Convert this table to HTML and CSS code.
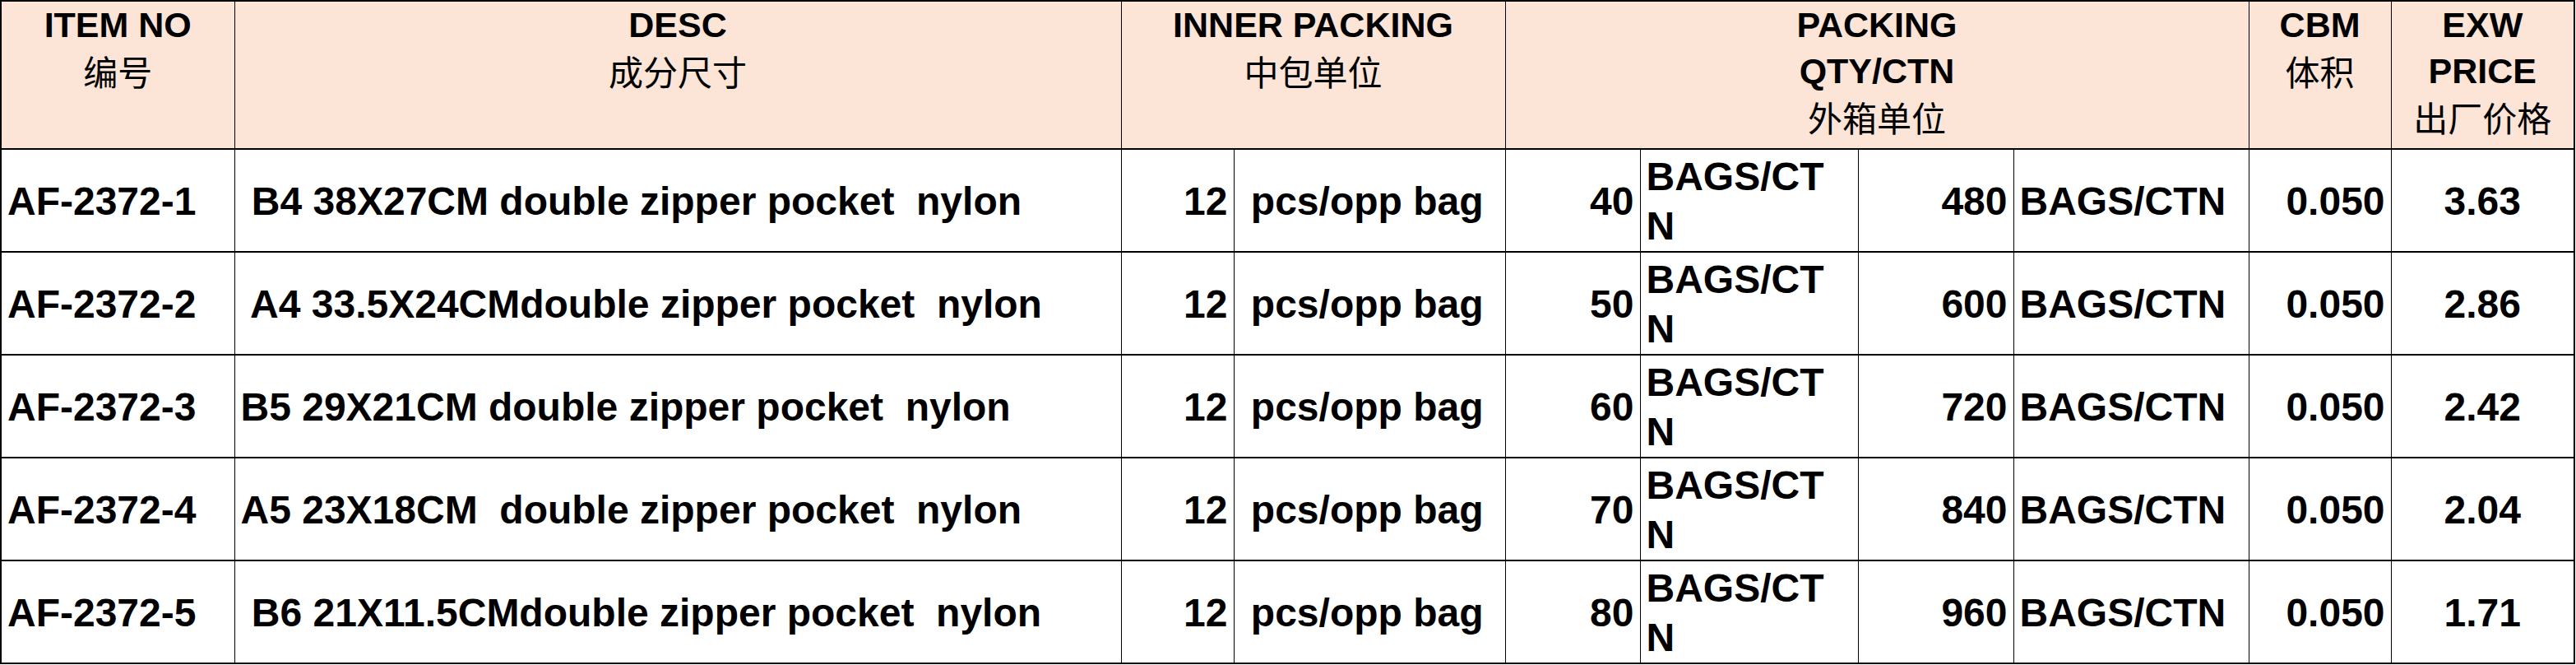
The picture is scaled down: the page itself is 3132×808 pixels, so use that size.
FILE: index.html
```html
<!DOCTYPE html>
<html>
<head>
<meta charset="utf-8">
<link rel="stylesheet" href="styles.css">
</head>
<body>
<table class="sheet">
  <colgroup>
    <col class="c-item"><col class="c-desc"><col class="c-inq"><col class="c-inu">
    <col class="c-pq"><col class="c-pu"><col class="c-tq"><col class="c-tu">
    <col class="c-cbm"><col class="c-price">
  </colgroup>
  <thead>
    <tr class="head-row">
      <th class="hd">ITEM NO<br><span class="cn">编号</span></th>
      <th class="hd">DESC<br><span class="cn">成分尺寸</span></th>
      <th class="hd" colspan="2">INNER PACKING<br><span class="cn">中包单位</span></th>
      <th class="hd" colspan="4">PACKING<br>QTY/CTN<br><span class="cn">外箱单位</span></th>
      <th class="hd">CBM<br><span class="cn">体积</span></th>
      <th class="hd">EXW<br>PRICE<br><span class="cn">出厂价格</span></th>
    </tr>
  </thead>
  <tbody>
    <tr class="row">
      <td class="cell left">AF-2372-1</td>
      <td class="cell left pre"> B4 38X27CM double zipper pocket  nylon</td>
      <td class="cell right">12</td>
      <td class="cell left pre"> pcs/opp bag</td>
      <td class="cell right">40</td>
      <td class="cell left wrap">BAGS/CT<br>N</td>
      <td class="cell right">480</td>
      <td class="cell left">BAGS/CTN</td>
      <td class="cell right">0.050</td>
      <td class="cell center">3.63</td>
    </tr>
    <tr class="row">
      <td class="cell left">AF-2372-2</td>
      <td class="cell left pre"> A4 33.5X24CMdouble zipper pocket  nylon</td>
      <td class="cell right">12</td>
      <td class="cell left pre"> pcs/opp bag</td>
      <td class="cell right">50</td>
      <td class="cell left wrap">BAGS/CT<br>N</td>
      <td class="cell right">600</td>
      <td class="cell left">BAGS/CTN</td>
      <td class="cell right">0.050</td>
      <td class="cell center">2.86</td>
    </tr>
    <tr class="row">
      <td class="cell left">AF-2372-3</td>
      <td class="cell left pre">B5 29X21CM double zipper pocket  nylon</td>
      <td class="cell right">12</td>
      <td class="cell left pre"> pcs/opp bag</td>
      <td class="cell right">60</td>
      <td class="cell left wrap">BAGS/CT<br>N</td>
      <td class="cell right">720</td>
      <td class="cell left">BAGS/CTN</td>
      <td class="cell right">0.050</td>
      <td class="cell center">2.42</td>
    </tr>
    <tr class="row">
      <td class="cell left">AF-2372-4</td>
      <td class="cell left pre">A5 23X18CM  double zipper pocket  nylon</td>
      <td class="cell right">12</td>
      <td class="cell left pre"> pcs/opp bag</td>
      <td class="cell right">70</td>
      <td class="cell left wrap">BAGS/CT<br>N</td>
      <td class="cell right">840</td>
      <td class="cell left">BAGS/CTN</td>
      <td class="cell right">0.050</td>
      <td class="cell center">2.04</td>
    </tr>
    <tr class="row">
      <td class="cell left">AF-2372-5</td>
      <td class="cell left pre"> B6 21X11.5CMdouble zipper pocket  nylon</td>
      <td class="cell right">12</td>
      <td class="cell left pre"> pcs/opp bag</td>
      <td class="cell right">80</td>
      <td class="cell left wrap">BAGS/CT<br>N</td>
      <td class="cell right">960</td>
      <td class="cell left">BAGS/CTN</td>
      <td class="cell right">0.050</td>
      <td class="cell center">1.71</td>
    </tr>
  </tbody>
</table>
</body>
</html>
```
FILE: styles.css
```css
html, body {
  margin: 0;
  padding: 0;
  background: #ffffff;
}

.sheet {
  border-collapse: collapse;
  table-layout: fixed;
  width: 3130px;
  font-family: "Liberation Sans", Arial, "Noto Sans CJK SC", sans-serif;
  font-weight: bold;
  color: #000000;
  border: 2px solid #000000;
}

.c-item { width: 284px; }
.c-desc { width: 1078px; }
.c-inq { width: 137px; }
.c-inu { width: 330px; }
.c-pq { width: 164px; }
.c-pu { width: 265px; }
.c-tq { width: 189px; }
.c-tu { width: 286px; }
.c-cbm { width: 173px; }
.c-price { width: 223px; }

.head-row {
  height: 180px;
}

.hd {
  background: #fce4d6;
  border: 1px solid #000000;
  border-bottom: 2px solid #000000;
  font-size: 43px;
  line-height: 56px;
  font-weight: bold;
  text-align: center;
  vertical-align: top;
  padding: 0 4px;
  overflow: hidden;
}

.cn {
  font-family: "Noto Sans CJK SC", sans-serif;
  font-weight: normal;
  font-size: 42px;
}

.row {
  height: 125px;
}

.cell {
  border-left: 1px solid #000000;
  border-right: 1px solid #000000;
  border-bottom: 2px solid #000000;
  font-size: 48px;
  line-height: 60px;
  vertical-align: middle;
  padding: 2px 7px 0 7px;
  white-space: nowrap;
  overflow: hidden;
}

.left { text-align: left; }
.right { text-align: right; }
.center { text-align: center; }
.pre { white-space: pre; }
.wrap { white-space: normal; }
```
